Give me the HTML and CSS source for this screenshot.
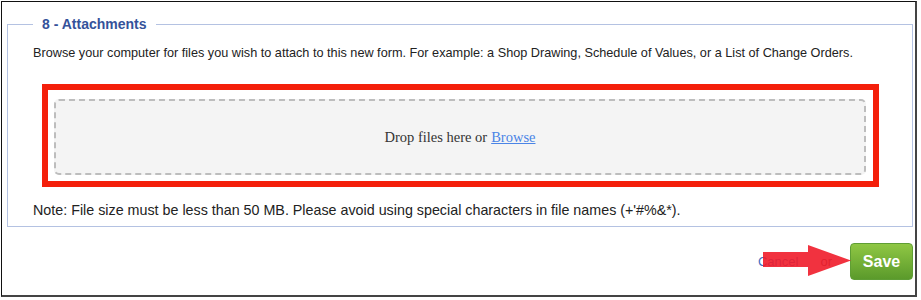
FILE: index.html
```html
<!DOCTYPE html>
<html lang="en">
<head>
  <meta charset="UTF-8">
  <title>Attachments</title>
  <link rel="stylesheet" href="styles.css">
</head>
<body>

  <div class="frame">
    <fieldset class="section">
      <legend>8 - Attachments</legend>
      <p class="intro">Browse your computer for files you wish to attach to this new form. For example: a Shop Drawing, Schedule of Values, or a List of Change Orders.</p>

      <div class="highlight-box">
        <div class="dropzone">
          Drop files here or <a href="#">Browse</a>
        </div>
      </div>

      <p class="note">Note: File size must be less than 50 MB. Please avoid using special characters in file names (+'#%&amp;*).</p>
    </fieldset>

    <div class="actions">
      <a href="#" class="cancel">Cancel</a>
      <span class="or">or</span>
      <button class="save">Save</button>

      <!-- annotation arrow pointing at Save -->
      <svg class="arrow" width="90" height="32" viewBox="0 0 90 32">
        <polygon points="0,7 45,7 45,0 88,15.5 45,31 45,22 0,22" />
      </svg>
    </div>
  </div>

</body>
</html>
```

FILE: styles.css
```css
body {
  margin: 0;
  font-family: 'Liberation Sans', Arial, sans-serif;
  font-size: 13px;
  color: #222;
  background: #fff;
}

.frame {
  box-sizing: border-box;
  width: 916px;
  height: 296px;
  margin: 1px 0 0 1px;
  border: 1px solid #111;
  border-right: 2px solid #444;
  border-bottom: 2px solid #444;
}

.section {
  box-sizing: border-box;
  width: 906px;
  margin: 14px 0 0 5px;
  padding: 0 0 8px 25px;
  border: 1px solid #b4c2e2;
}

.section legend {
  padding: 0 9px;
  font-size: 14px;
  line-height: 16px;
  font-weight: bold;
  color: #34529a;
}

.intro {
  margin: 13px 0 0;
  font-size: 12.7px;
  line-height: 16px;
}

.highlight-box {
  box-sizing: border-box;
  width: 837px;
  height: 103px;
  margin: 23px 0 0 9px;
  padding: 9px 7px 6px 6px;
  border: 6px solid #f41f0b;
}

.dropzone {
  box-sizing: border-box;
  height: 76px;
  display: flex;
  align-items: center;
  justify-content: center;
  gap: 4px;
  border: 2px dashed #bdbdbd;
  border-radius: 5px;
  background: #f4f4f4;
  font-family: 'Liberation Serif', 'Times New Roman', serif;
  font-size: 14.5px;
  color: #333;
}

.dropzone a {
  color: #4a84e6;
}

.note {
  margin: 15px 0 0;
  font-size: 14.3px;
  line-height: 16px;
}

.actions {
  position: relative;
  display: flex;
  align-items: center;
  justify-content: flex-end;
  margin-top: 16px;
  padding-right: 2px;
}

.cancel {
  color: #3e6fc2;
  text-decoration: none;
}

.or {
  margin: 0 18px 0 22px;
  color: #555;
}

.save {
  box-sizing: border-box;
  width: 63px;
  height: 37px;
  padding: 0;
  border: 1px solid #5f9e35;
  border-radius: 4px;
  background: linear-gradient(#8fc744, #5b9a2b);
  color: #fff;
  font-family: 'Liberation Sans', Arial, sans-serif;
  font-size: 16px;
  font-weight: bold;
}

.arrow {
  position: absolute;
  left: 761px;
  top: 2px;
}

.arrow polygon {
  fill: #f01c2a;
  opacity: 0.9;
}
```
